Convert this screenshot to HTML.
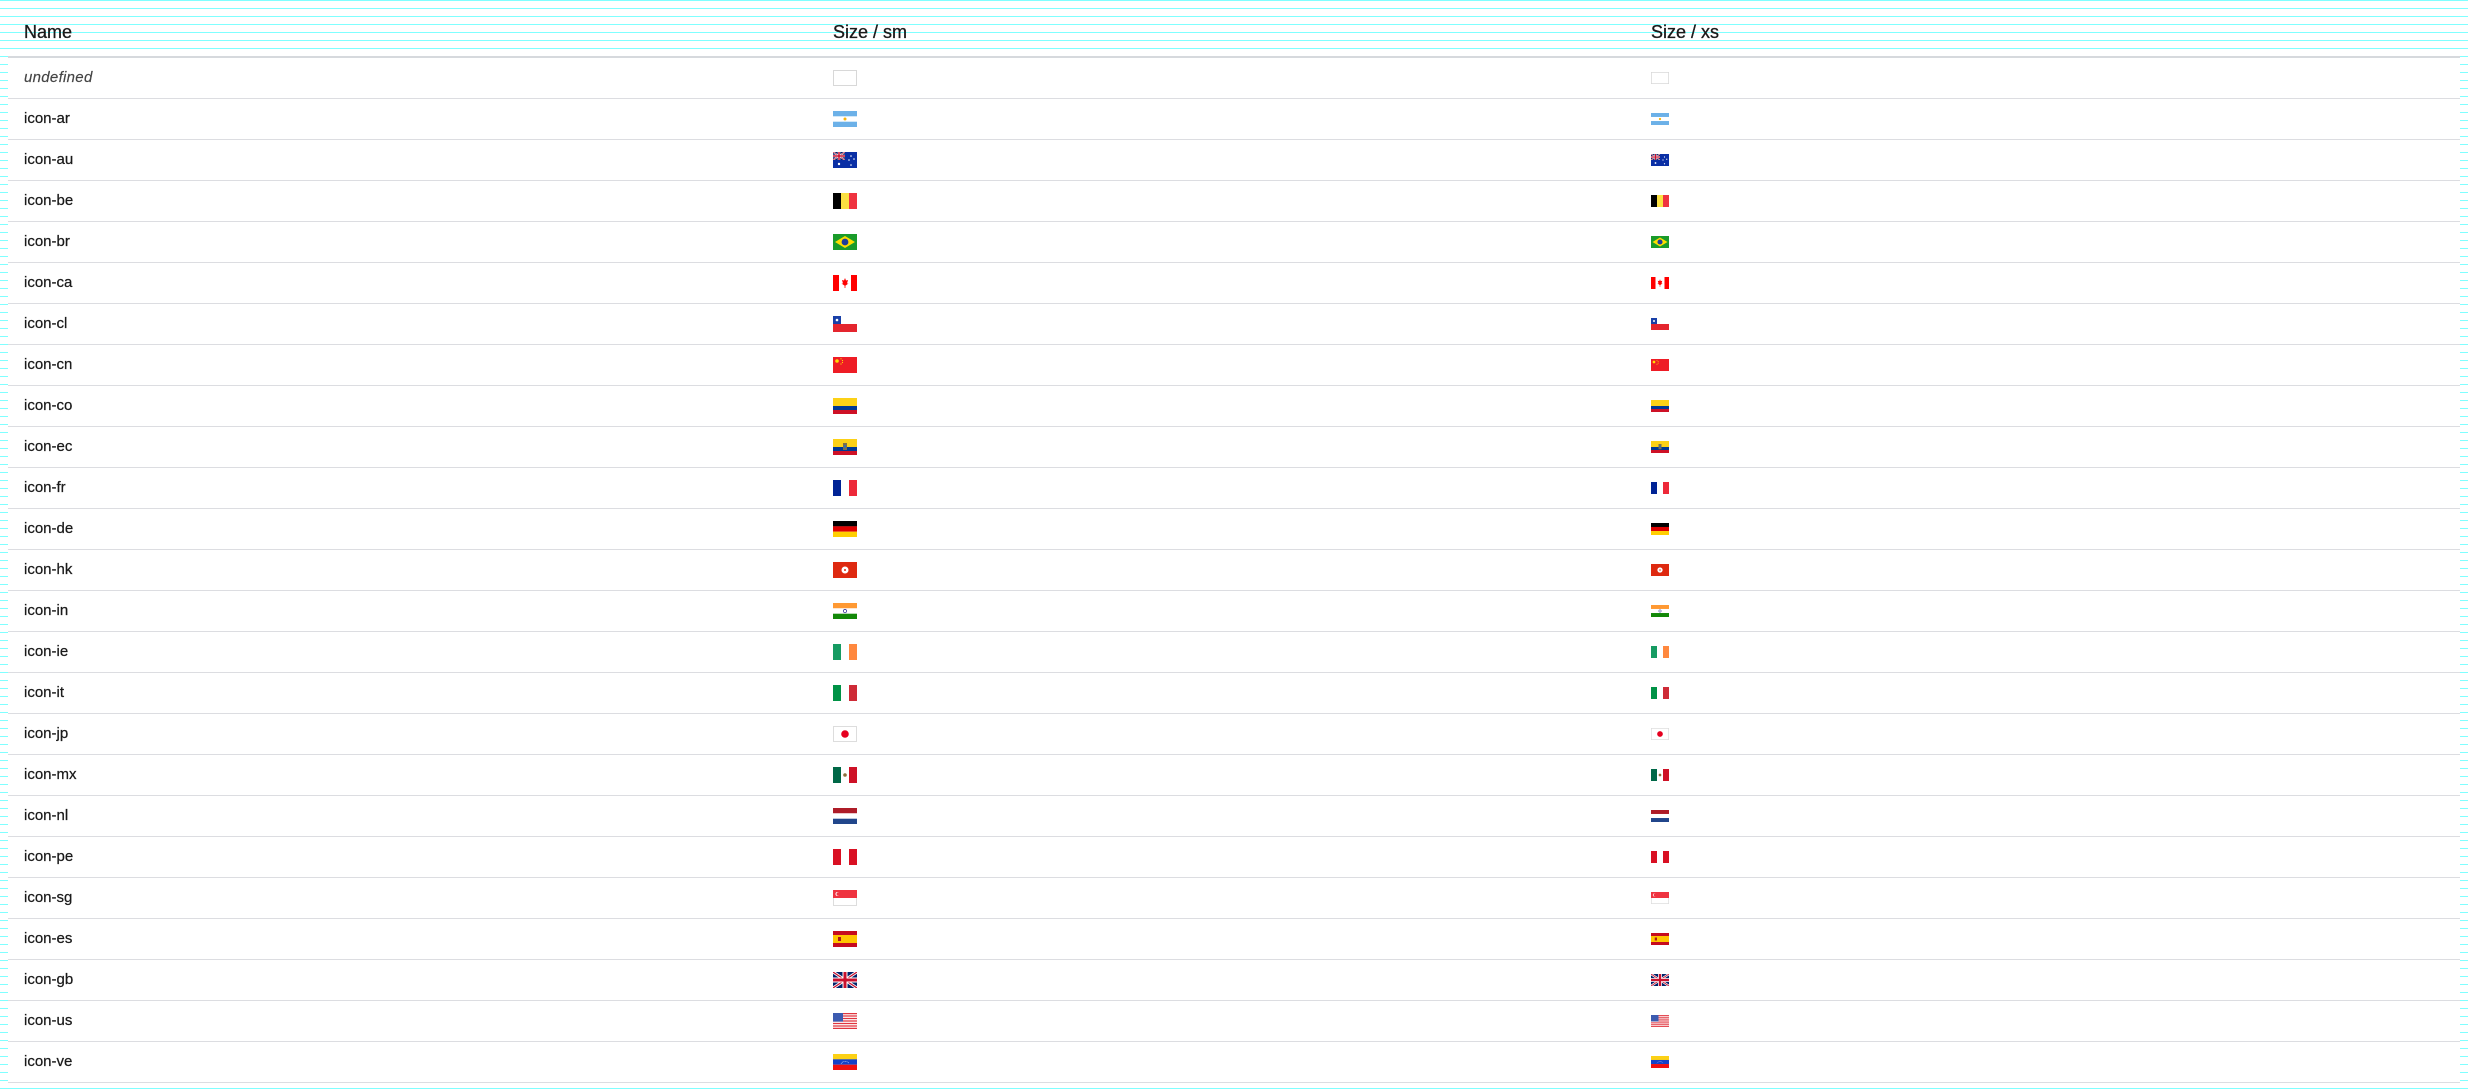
<!DOCTYPE html>
<html><head><meta charset="utf-8"><style>
html,body{margin:0;padding:0}
body{width:2468px;height:1091px;position:relative;overflow:hidden;font-family:"Liberation Sans",sans-serif;
background:repeating-linear-gradient(to bottom,#80ffff 0,#80ffff 1px,#fff 1px,#fff 8px);}
.tbl{position:absolute;left:8px;top:49px;width:2452px;height:1039px;background:#fff}
.hd{position:absolute;top:22px;font-size:18px;color:#1a1a1a;line-height:20px;-webkit-text-stroke:.3px #1a1a1a}
.hline{position:absolute;left:8px;top:56px;width:2452px;height:2px;background:#d6d9dd}
.row{position:absolute;left:8px;width:2452px;height:40px;border-bottom:1px solid #dcdde1}
.row span{position:absolute;left:16px;top:0;line-height:40px;font-size:15px;color:#1a1a1a;-webkit-text-stroke:.25px #1a1a1a}
.row span.i{font-style:italic;color:#444;letter-spacing:.3px;-webkit-text-stroke:.15px #444}
.row svg{position:absolute}
.sm{left:825px;top:12px;width:24px;height:16px}
.xs{left:1643px;top:14px;width:18px;height:12px}
</style></head><body>
<svg width="0" height="0" style="position:absolute">
<defs>
<symbol id="f-un" viewBox="0 0 24 16"><rect x=".5" y=".5" width="23" height="15" fill="#fff" stroke="#d8d8d8"/></symbol>
<symbol id="f-ar" viewBox="0 0 24 16"><rect width="24" height="16" fill="#6cb1e8"/><rect y="5.3" width="24" height="5.4" fill="#fff"/><circle cx="12" cy="8" r="1.5" fill="#f6b40e"/></symbol>
<symbol id="f-ukc" viewBox="0 0 24 16"><rect width="24" height="16" fill="#012169"/><path d="M0 0L24 16M24 0L0 16" stroke="#fff" stroke-width="3"/><path d="M0 0L24 16M24 0L0 16" stroke="#c8102e" stroke-width="1.2"/><path d="M12 0V16M0 8H24" stroke="#fff" stroke-width="5"/><path d="M12 0V16M0 8H24" stroke="#c8102e" stroke-width="3"/></symbol>
<symbol id="f-au" viewBox="0 0 24 16"><rect width="24" height="16" fill="#0a2fa5"/><svg width="12" height="8" viewBox="0 0 24 16"><use href="#f-ukc"/></svg><circle cx="6" cy="12" r="1.2" fill="#fff"/><circle cx="18" cy="4" r=".8" fill="#fff"/><circle cx="21" cy="7" r=".8" fill="#fff"/><circle cx="16" cy="8" r=".8" fill="#fff"/><circle cx="18" cy="13" r=".8" fill="#fff"/></symbol>
<symbol id="f-be" viewBox="0 0 24 16"><rect width="8" height="16" fill="#000"/><rect x="8" width="8" height="16" fill="#fbe042"/><rect x="16" width="8" height="16" fill="#ef3340"/></symbol>
<symbol id="f-br" viewBox="0 0 24 16"><rect width="24" height="16" fill="#1a9b2a"/><path d="M12 2L22 8L12 14L2 8Z" fill="#fede00"/><circle cx="12" cy="8" r="3.4" fill="#1d3e9a"/></symbol>
<symbol id="f-ca" viewBox="0 0 24 16"><rect width="24" height="16" fill="#fff"/><rect width="6" height="16" fill="#f00"/><rect x="18" width="6" height="16" fill="#f00"/><path d="M12 3L13 5.5L15 5L14 8.5L15.5 8.5L12 11L8.5 8.5L10 8.5L9 5L11 5.5Z M11.6 11H12.4V13H11.6Z" fill="#f00"/></symbol>
<symbol id="f-cl" viewBox="0 0 24 16"><rect width="24" height="16" fill="#fff"/><rect y="8" width="24" height="8" fill="#e4252e"/><rect width="8" height="8" fill="#1940a8"/><circle cx="4" cy="4" r="1.3" fill="#fff"/></symbol>
<symbol id="f-cn" viewBox="0 0 24 16"><rect width="24" height="16" fill="#ee1c25"/><circle cx="4" cy="4" r="1.8" fill="#ffde00"/><circle cx="8" cy="1.8" r=".6" fill="#ffde00"/><circle cx="9.5" cy="3.5" r=".6" fill="#ffde00"/><circle cx="9.5" cy="5.5" r=".6" fill="#ffde00"/><circle cx="8" cy="7" r=".6" fill="#ffde00"/></symbol>
<symbol id="f-co" viewBox="0 0 24 16"><rect width="24" height="8" fill="#fcd116"/><rect y="8" width="24" height="4" fill="#003893"/><rect y="12" width="24" height="4" fill="#ce1126"/></symbol>
<symbol id="f-ec" viewBox="0 0 24 16"><use href="#f-co"/><rect x="10" y="4" width="4" height="7" fill="#7a6f4a"/><rect x="11" y="6" width="2" height="3" fill="#3b6ea8"/></symbol>
<symbol id="f-fr" viewBox="0 0 24 16"><rect width="8" height="16" fill="#002395"/><rect x="8" width="8" height="16" fill="#fff"/><rect x="16" width="8" height="16" fill="#ed2939"/></symbol>
<symbol id="f-de" viewBox="0 0 24 16"><rect width="24" height="5.4" fill="#000"/><rect y="5.3" width="24" height="5.4" fill="#dd0000"/><rect y="10.7" width="24" height="5.3" fill="#ffce00"/></symbol>
<symbol id="f-hk" viewBox="0 0 24 16"><rect width="24" height="16" fill="#de2910"/><circle cx="12" cy="8" r="3.5" fill="#fff"/><circle cx="12" cy="8" r="1" fill="#de2910"/></symbol>
<symbol id="f-in" viewBox="0 0 24 16"><rect width="24" height="5.4" fill="#ff9933"/><rect y="5.3" width="24" height="5.4" fill="#fff"/><rect y="10.7" width="24" height="5.3" fill="#138808"/><circle cx="12" cy="8" r="1.6" fill="none" stroke="#000080" stroke-width=".6"/></symbol>
<symbol id="f-ie" viewBox="0 0 24 16"><rect width="8" height="16" fill="#169b62"/><rect x="8" width="8" height="16" fill="#fff"/><rect x="16" width="8" height="16" fill="#ff883e"/></symbol>
<symbol id="f-it" viewBox="0 0 24 16"><rect width="8" height="16" fill="#009246"/><rect x="8" width="8" height="16" fill="#fff"/><rect x="16" width="8" height="16" fill="#ce2b37"/></symbol>
<symbol id="f-jp" viewBox="0 0 24 16"><rect x=".5" y=".5" width="23" height="15" fill="#fff" stroke="#ddd"/><circle cx="12" cy="8" r="3.8" fill="#e6001f"/></symbol>
<symbol id="f-mx" viewBox="0 0 24 16"><rect width="8" height="16" fill="#006847"/><rect x="8" width="8" height="16" fill="#fff"/><rect x="16" width="8" height="16" fill="#ce1126"/><circle cx="12" cy="8" r="1.8" fill="#8c6d3a"/></symbol>
<symbol id="f-nl" viewBox="0 0 24 16"><rect width="24" height="5.4" fill="#ae1c28"/><rect y="5.3" width="24" height="5.4" fill="#fff"/><rect y="10.7" width="24" height="5.3" fill="#21468b"/></symbol>
<symbol id="f-pe" viewBox="0 0 24 16"><rect width="8" height="16" fill="#d91023"/><rect x="8" width="8" height="16" fill="#fff"/><rect x="16" width="8" height="16" fill="#d91023"/></symbol>
<symbol id="f-sg" viewBox="0 0 24 16"><rect x=".5" y=".5" width="23" height="15" fill="#fff" stroke="#ddd"/><rect width="24" height="8" fill="#ef3340"/><circle cx="4.5" cy="4" r="2" fill="#fff"/><circle cx="5.3" cy="4" r="1.8" fill="#ef3340"/></symbol>
<symbol id="f-es" viewBox="0 0 24 16"><rect width="24" height="16" fill="#c60b1e"/><rect y="4" width="24" height="8" fill="#ffc400"/><rect x="5" y="6" width="3" height="4" fill="#ad1519"/></symbol>
<symbol id="f-gb" viewBox="0 0 24 16"><use href="#f-ukc"/></symbol>
<symbol id="f-us" viewBox="0 0 24 16"><rect width="24" height="16" fill="#fff"/><path d="M0 .6H24M0 3H24M0 5.5H24M0 8H24M0 10.5H24M0 13H24M0 15.4H24" stroke="#e0353f" stroke-width="1.25"/><rect width="10" height="8.6" fill="#3c5bb0"/></symbol>
<symbol id="f-ve" viewBox="0 0 24 16"><rect width="24" height="5.4" fill="#fcd116"/><rect y="5.3" width="24" height="5.4" fill="#1441c8"/><rect y="10.7" width="24" height="5.3" fill="#ef1010"/><path d="M8 9.5Q12 5 16 9.5" fill="none" stroke="#fff" stroke-width=".6" stroke-dasharray=".8 .8"/></symbol>
</defs></svg>
<div class="tbl"></div>
<div class="hd" style="left:24px">Name</div>
<div class="hd" style="left:833px">Size / sm</div>
<div class="hd" style="left:1651px">Size / xs</div>
<div class="hline"></div>
<div id="rows"></div>
<script>
var L=[["undefined","un"],["icon-ar","ar"],["icon-au","au"],["icon-be","be"],["icon-br","br"],["icon-ca","ca"],["icon-cl","cl"],["icon-cn","cn"],["icon-co","co"],["icon-ec","ec"],["icon-fr","fr"],["icon-de","de"],["icon-hk","hk"],["icon-in","in"],["icon-ie","ie"],["icon-it","it"],["icon-jp","jp"],["icon-mx","mx"],["icon-nl","nl"],["icon-pe","pe"],["icon-sg","sg"],["icon-es","es"],["icon-gb","gb"],["icon-us","us"],["icon-ve","ve"]];
var h="";
L.forEach(function(r,i){h+='<div class="row" style="top:'+(58+41*i)+'px"><span'+(i==0?' class="i"':'')+'>'+r[0]+'</span><svg class="sm" viewBox="0 0 24 16"><use href="#f-'+r[1]+'"/></svg><svg class="xs" viewBox="0 0 24 16"><use href="#f-'+r[1]+'"/></svg></div>';});
document.getElementById("rows").innerHTML=h;
</script>
</body></html>
